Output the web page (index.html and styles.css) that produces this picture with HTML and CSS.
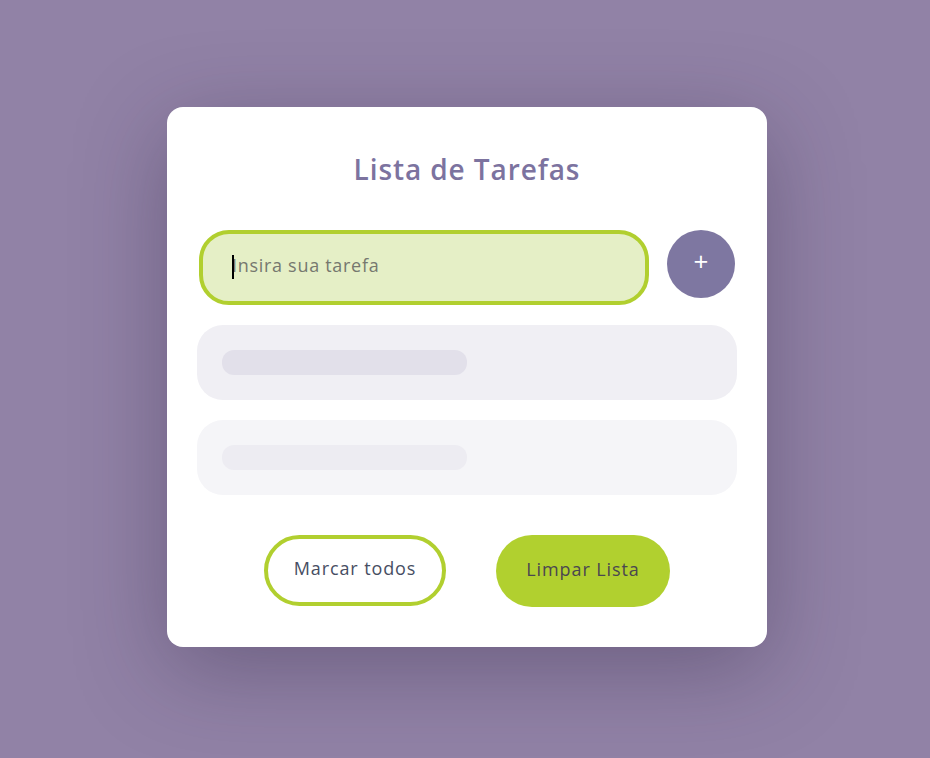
FILE: index.html
```html
<!DOCTYPE html>
<html lang="pt-BR">
<head>
<meta charset="utf-8">
<title>Lista de Tarefas</title>
<link rel="stylesheet" href="styles.css">
</head>
<body>
<main class="card">
  <h1 class="title">Lista de Tarefas</h1>
  <div class="add-row">
    <div class="field">
      <span class="caret"></span>
      <input class="task-input" type="text" placeholder="Insira sua tarefa">
    </div>
    <button class="add-btn" type="button">+</button>
  </div>
  <ul class="list">
    <li class="item item-a"><span class="bar"></span></li>
    <li class="item item-b"><span class="bar"></span></li>
  </ul>
  <div class="actions">
    <button class="btn btn-outline" type="button">Marcar todos</button>
    <button class="btn btn-fill" type="button">Limpar Lista</button>
  </div>
</main>
</body>
</html>
```
FILE: styles.css
```css
* { box-sizing: border-box; }
html, body { height: 100%; }
body {
  margin: 0;
  background: #9182a6;
  font-family: "Open Sans", "Noto Sans", sans-serif;
  display: flex;
  align-items: center;
  justify-content: center;
  padding: 0 0 4px 4px;
}
.card {
  width: 600px;
  height: 540px;
  background: #fff;
  border-radius: 16px;
  box-shadow: 0 22px 90px rgba(40, 30, 60, 0.35);
  padding: 45px 30px 0 30px;
  display: flex;
  flex-direction: column;
}
.title {
  margin: 0;
  text-align: center;
  font-size: 28px;
  font-weight: 600;
  color: #7c739f;
  line-height: 34px;
  letter-spacing: 0.9px;
}
.add-row {
  margin-top: 44px;
  display: flex;
  align-items: flex-start;
  gap: 18px;
  padding-left: 2px;
}
.field {
  position: relative;
  width: 450px;
  height: 75px;
}
.task-input {
  width: 100%;
  height: 100%;
  border: 4px solid #b1cf2f;
  background: #e5efc6;
  border-radius: 30px;
  padding: 0 0 6px 29px;
  font-family: inherit;
  font-size: 18px;
  letter-spacing: 0.7px;
  color: #555;
  outline: none;
}
.task-input::placeholder { color: #76786f; }
.caret {
  position: absolute;
  left: 33px;
  top: 25px;
  width: 2px;
  height: 24px;
  background: #000;
  z-index: 1;
}
.add-btn {
  width: 68px;
  height: 68px;
  border-radius: 50%;
  border: none;
  background: #7e77a1;
  color: #fff;
  font-family: inherit;
  font-size: 26px;
  line-height: 1;
  padding: 0 0 6px 0;
}
.list {
  list-style: none;
  margin: 20px 0 0 0;
  padding: 0;
  display: flex;
  flex-direction: column;
  gap: 20px;
}
.item {
  height: 75px;
  border-radius: 26px;
  padding: 25px 0 0 25px;
}
.item-a { background: #f0eff4; }
.item-b { background: #f5f5f8; }
.bar {
  display: block;
  width: 245px;
  height: 25px;
  border-radius: 12px;
}
.item-a .bar { background: #e2e0ea; }
.item-b .bar { background: #edecf2; }
.actions {
  margin-top: 40px;
  display: flex;
  justify-content: center;
  gap: 50px;
}
.btn {
  height: 72px;
  border-radius: 36px;
  font-family: inherit;
  font-size: 18px;
  letter-spacing: 0.9px;
  padding: 0 0 5px 0;
}
.btn-outline {
  width: 182px;
  height: 71px;
  background: #fff;
  border: 4px solid #b1cf2f;
  color: #474e63;
}
.btn-fill {
  width: 174px;
  background: #b1d02f;
  border: none;
  color: #4a4750;
}
```
